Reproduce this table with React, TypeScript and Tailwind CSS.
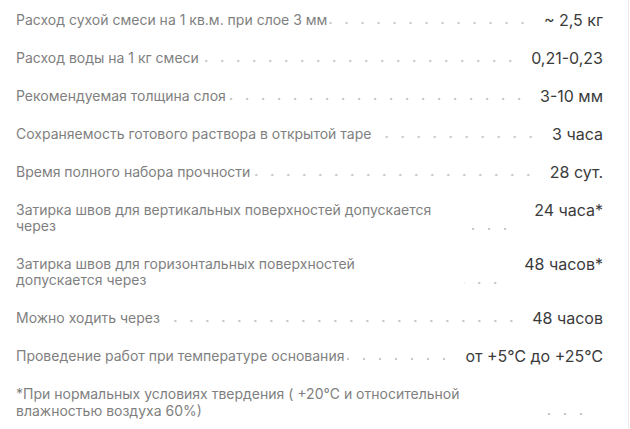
import React from 'react';

type Row = { label: string; value: string; wrap?: boolean };

const rows: Row[] = [
  { label: 'Расход сухой смеси на 1 кв.м. при слое 3 мм', value: '~ 2,5 кг' },
  { label: 'Расход воды на 1 кг смеси', value: '0,21-0,23' },
  { label: 'Рекомендуемая толщина слоя', value: '3-10 мм' },
  { label: 'Сохраняемость готового раствора в открытой таре', value: '3 часа' },
  { label: 'Время полного набора прочности', value: '28 сут.' },
  { label: 'Затирка швов для вертикальных поверхностей допускается через', value: '24 часа*', wrap: true },
  { label: 'Затирка швов для горизонтальных поверхностей допускается через', value: '48 часов*', wrap: true },
  { label: 'Можно ходить через', value: '48 часов' },
  { label: 'Проведение работ при температуре основания', value: 'от +5℃ до +25℃' },
];

// dotted leader: small dots every 16px, anchored to the right end
const leader =
  'flex-1 min-w-0 self-stretch bg-[radial-gradient(circle,#c6c6c6_1px,transparent_1.6px)] bg-[length:16px_10px] bg-repeat-x bg-[position:right_bottom]';

export default function App() {
  return (
    <div className="w-[630px] h-[429px] bg-white overflow-hidden font-['Inter',sans-serif]">
      <div className="w-[629px] h-full border-r border-[#ececec] pl-4 pr-[25px] pt-3 flex flex-col gap-[22px]">
        {rows.map((r) => (
          <div key={r.label} className="flex items-start">
            <div className="flex-1 flex items-stretch min-w-0">
              <span className="max-w-[424px] text-[14px] leading-[16px] text-[#7f7f7f]">{r.label}</span>
              <span className={r.wrap ? `${leader} ml-[24px]` : `${leader} ml-[2px]`} />
            </div>
            <div className={`${r.wrap ? 'pl-[21px]' : 'pl-[13px]'} text-[16px] leading-[16px] text-[#3b3b3b] whitespace-nowrap`}>
              {r.value}
            </div>
          </div>
        ))}
        <div className="flex items-start mt-[-1px]">
          <div className="flex-1 flex items-stretch min-w-0">
            <span className="w-[526px] shrink-0 text-[14px] leading-[17px] text-[#7f7f7f]">
              <span className="block max-w-[470px]">
                *При нормальных условиях твердения ( +20℃ и относительной влажностью воздуха 60%)
              </span>
            </span>
            <span className={leader} />
          </div>
          <div className="w-[14px]" />
        </div>
      </div>
    </div>
  );
}
